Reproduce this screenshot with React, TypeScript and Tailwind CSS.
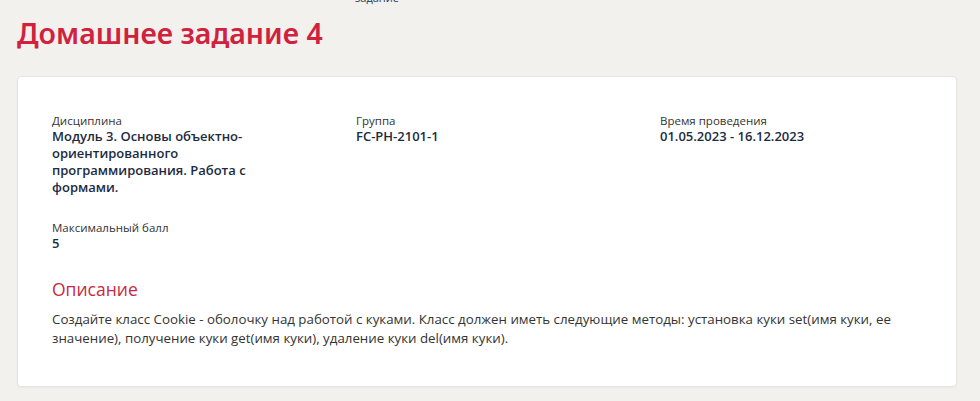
export default function App() {
    const fields = [
        { label: 'Дисциплина', value: 'Модуль 3. Основы объектно-ориентированного программирования. Работа с формами.' },
        { label: 'Группа', value: 'FC-PH-2101-1' },
        { label: 'Время проведения', value: '01.05.2023 - 16.12.2023' },
    ]

    return (
        <div className="min-h-[401px] bg-[#f2f1ee] pl-[17px] pr-[23px] pb-4 font-['Open_Sans',sans-serif] text-[#333]">
            {/* cut-off header link */}
            <div className="h-[4px] overflow-hidden pl-[338px]">
                <div className="-mt-[10px] text-[11px] text-[#1d3a5c]">задание</div>
            </div>

            <h1 className="mt-[10px] font-['Noto_Sans',sans-serif] text-[28.5px] font-semibold leading-[38px] text-[#d0223d]">
                Домашнее задание 4
            </h1>

            <div className="mt-[24px] rounded-[4px] border border-[#e6e5e1] bg-white px-[34px] pt-[37px] pb-[38px] shadow-[0_1px_2px_rgba(0,0,0,0.04)]">
                <div className="grid grid-cols-3 gap-x-[42px]">
                    {fields.map((f) => (
                        <div key={f.label}>
                            <div className="text-[11.5px] leading-[14px] text-[#333]">{f.label}</div>
                            <div className="w-[230px] text-[13px] font-semibold leading-[17px] text-[#1c2b40]">{f.value}</div>
                        </div>
                    ))}
                </div>

                <div className="mt-[24px]">
                    <div className="text-[11.5px] leading-[15px] text-[#333]">Максимальный балл</div>
                    <div className="text-[13px] font-semibold leading-[16px] text-[#1c2b40]">5</div>
                </div>

                <h2 className="mt-[26px] text-[17.5px] leading-[24px] text-[#c9283f]">Описание</h2>
                <p className="mt-[9px] text-[13.3px] leading-[19px] text-[#333]">
                    Создайте класс Cookie - оболочку над работой с куками. Класс должен иметь следующие методы: установка куки set(имя куки, ее
                    значение), получение куки get(имя куки), удаление куки del(имя куки).
                </p>
            </div>
        </div>
    )
}
